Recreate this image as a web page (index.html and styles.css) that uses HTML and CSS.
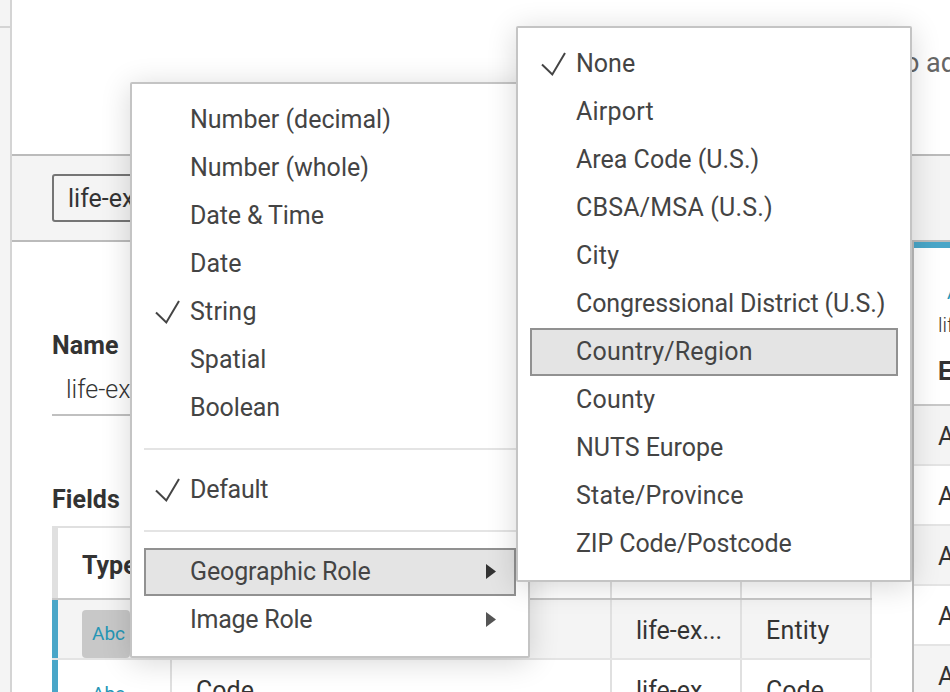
FILE: index.html
```
<!DOCTYPE html>
<html lang="en">
<head>
<meta charset="utf-8">
<title>Data Source</title>
<link rel="stylesheet" href="styles.css">
</head>
<body>
<div class="app">
  <aside class="rail"><div class="rail-head"></div></aside>
  <main class="workspace">
    <section class="canvas"><p class="hint">o add more</p></section>
    <section class="toolbar"><div class="table-picker">life-ex</div></section>
    <div class="panes">
      <section class="metadata">
        <h2 class="label">Name</h2>
        <div class="name-input">life-ex</div>
        <h2 class="label fields-label">Fields</h2>
        <div class="fields">
          <div class="row head"><b>Type</b><span></span><span></span><span></span></div>
          <div class="row shaded"><b><i class="type boxed">Abc</i></b><span></span><span>life-ex...</span><span class="loose">Entity</span></div>
          <div class="row"><b><i class="type">Abc</i></b><span>Code</span><span>life-ex...</span><span>Code</span></div>
        </div>
      </section>
      <section class="preview">
        <div class="preview-head"><i class="preview-type">Abc</i><span class="source">life-expectancy</span><b class="column-name">Entity</b></div>
        <div class="cell">Afghanistan</div>
        <div class="cell">Afghanistan</div>
        <div class="cell">Afghanistan</div>
        <div class="cell">Afghanistan</div>
        <div class="cell">Afghanistan</div>
      </section>
    </div>
  </main>
</div>

<ul class="menu type-menu">
  <li><span>Number (decimal)</span></li>
  <li><span>Number (whole)</span></li>
  <li><span class="snug">Date &amp; Time</span></li>
  <li><span>Date</span></li>
  <li><svg class="check" viewBox="0 0 26 26"><path d="M1 13.5 11.3 23.5 24 2"/></svg><span class="loose">String</span></li>
  <li><span>Spatial</span></li>
  <li><span class="snug">Boolean</span></li>
  <li class="separator"></li>
  <li><svg class="check" viewBox="0 0 26 26"><path d="M1 13.5 11.3 23.5 24 2"/></svg><span class="tight">Default</span></li>
  <li class="separator"></li>
  <li class="active"><span class="snug">Geographic Role</span><svg class="arrow" viewBox="0 0 10 15"><path d="M0 0 10 7.5 0 15Z"/></svg></li>
  <li><span class="tight">Image Role</span><svg class="arrow" viewBox="0 0 10 15"><path d="M0 0 10 7.5 0 15Z"/></svg></li>
</ul>

<ul class="menu role-menu">
  <li><svg class="check" viewBox="0 0 26 26"><path d="M1 13.5 11.3 23.5 24 2"/></svg><span>None</span></li>
  <li><span class="loose">Airport</span></li>
  <li><span>Area Code (U.S.)</span></li>
  <li><span class="loose">CBSA/MSA (U.S.)</span></li>
  <li><span class="loose">City</span></li>
  <li><span class="snug">Congressional District (U.S.)</span></li>
  <li class="active"><span class="loose">Country/Region</span></li>
  <li><span class="loose">County</span></li>
  <li><span>NUTS Europe</span></li>
  <li><span class="loose">State/Province</span></li>
  <li><span class="snug">ZIP Code/Postcode</span></li>
</ul>
</body>
</html>
```
FILE: styles.css
```
* { box-sizing: border-box; }
body { margin: 0; overflow: hidden; background: #fff; color: #333; font: 25px/48px Roboto, "Liberation Sans", sans-serif; }
ul, p, h2 { margin: 0; padding: 0; list-style: none; }
i { font-style: normal; }
.app { display: flex; width: 950px; height: 692px; overflow: hidden; }
.rail { width: 12px; flex: none; background: #f4f4f4; border-right: 2px solid #d4d4d4; }
.rail-head { height: 28px; border-bottom: 2px solid #d4d4d4; }
.workspace { flex: 1; min-width: 0; display: flex; flex-direction: column; }
.canvas { height: 156px; flex: none; border-bottom: 2px solid #bbb; padding: 39px 0 0 892px; overflow: hidden; white-space: nowrap; color: #666; font-size: 27px; }
.toolbar { height: 86px; flex: none; background: #f4f4f4; border-bottom: 2px solid #bbb; padding: 18px 40px; }
.table-picker { width: 300px; height: 48px; border: 2px solid #757575; border-radius: 3px; padding-left: 14px; line-height: 45px; }
.panes { flex: 1; min-height: 0; display: flex; overflow: hidden; }
.metadata { width: 900px; flex: none; padding: 80px 0 0 40px; }
.label { font-size: 25px; line-height: 48px; font-weight: 700; letter-spacing: .1px; }
.name-input { width: 350px; height: 46px; border-bottom: 2px solid #c0c0c0; padding-left: 14px; line-height: 40px; font-weight: 300; }
.fields-label { margin-top: 60px; }
.fields { width: 820px; margin-top: 2px; border-top: 2px solid #e0e0e0; }
.row { display: grid; grid-template-columns: 120px 440px 130px 130px; height: 60px; border-bottom: 2px solid #e4e4e4; line-height: 61px; overflow: hidden; }
.row > * { border-right: 2px solid #e0e0e0; padding-left: 24px; white-space: nowrap; overflow: hidden; }
.row > b { border-left: 6px solid #49a6c8; }
.head { height: 72px; border-bottom-color: #c8c8c8; line-height: 76px; }
.head > b { border-left-color: #e0e0e0; }
.shaded { background: #f4f4f4; }
.type { display: block; width: 48px; height: 48px; margin-top: 10px; border-radius: 4px; padding-left: 10px; line-height: 48px; font-size: 19px; font-weight: 400; color: #2596b5; }
.boxed { background: #c8c8c8; }
.preview { width: 300px; flex: none; border-left: 2px solid #bbb; }
.preview-head { height: 164px; display: flex; flex-direction: column; padding-left: 24px; border-top: 6px solid #49a6c8; border-bottom: 2px solid #c8c8c8; }
.preview-type { margin: 33px 0 0 9px; font-size: 19px; line-height: 24px; color: #2596b5; }
.source { margin-top: 5px; font-size: 20px; line-height: 30px; font-weight: 300; }
.column-name { margin-top: 8px; line-height: 48px; }
.cell { height: 60px; padding-left: 24px; border-bottom: 2px solid #e4e4e4; line-height: 61px; }
.cell:nth-child(even) { background: #f4f4f4; }
.menu { position: absolute; padding: 12px; background: #fff; border: 2px solid #c4c4c4; border-radius: 2px; box-shadow: 0 4px 30px rgba(0,0,0,.16); color: #444; }
.type-menu { left: 130px; top: 82px; width: 400px; height: 576px; }
.role-menu { left: 516px; top: 26px; width: 396px; height: 556px; }
.menu li { position: relative; height: 48px; padding-left: 46px; line-height: 48px; white-space: nowrap; }
.menu .active { background: #e4e4e4; border: 2px solid #919191; padding-left: 44px; line-height: 44px; }
.menu .separator { height: 2px; margin: 16px 0; background: #e4e4e4; }
.loose { letter-spacing: .2px; }
.snug { letter-spacing: -.12px; }
.tight { letter-spacing: -.25px; }
.check { position: absolute; left: 11px; top: 11px; width: 26px; height: 26px; fill: none; stroke: #444; stroke-width: 2; }
.arrow { position: absolute; right: 20px; top: 16px; width: 10px; height: 15px; fill: #555; }
.active .arrow { right: 18px; top: 14px; fill: #333; }
```
